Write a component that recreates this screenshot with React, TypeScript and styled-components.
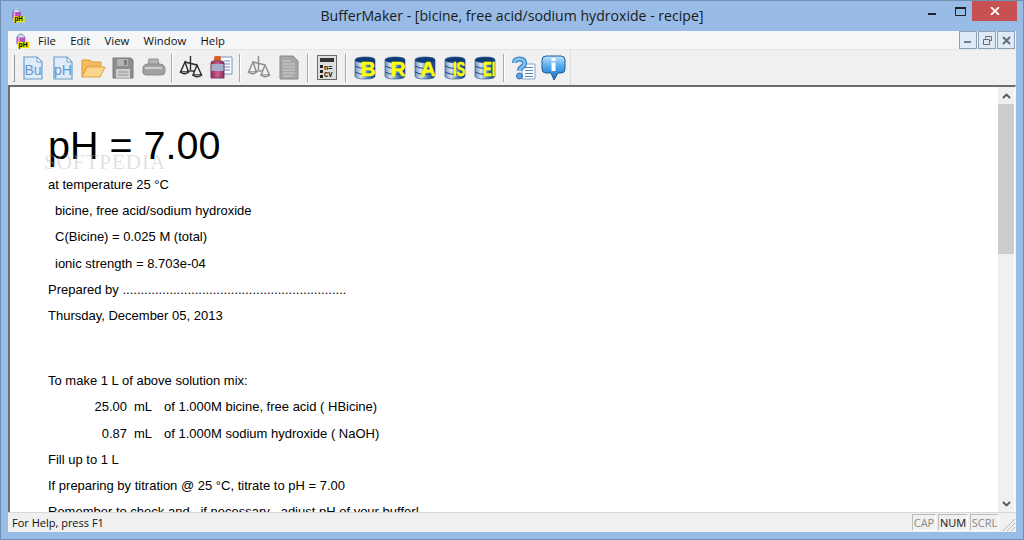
import React from "react";
import styled, { createGlobalStyle } from "styled-components";

const Global = createGlobalStyle`
  html, body { margin: 0; padding: 0; width: 1024px; height: 540px; overflow: hidden; }
  #root { width: 1024px; height: 540px; }
  * { box-sizing: border-box; }
`;

const Frame = styled.div`
  width: 1024px; height: 540px; background: #98bce6; border: 1px solid #6f8fb5;
  display: flex; flex-direction: column; font-family: "Open Sans", "Liberation Sans", sans-serif; color: #000;
`;
const TitleBar = styled.div`
  height: 30px; display: grid; grid-template-columns: 1fr auto 1fr; align-items: start; flex: none;
`;
const TitleLeft = styled.div` padding: 6px 0 0 10px; display: flex; `;
const TitleText = styled.div`
  font-size: 14.1px; line-height: 20px; padding-top: 5px; color: #1a1a1a; white-space: nowrap;
`;
const WinControls = styled.div` display: flex; justify-content: flex-end; padding-right: 6px; `;
const WinBtn = styled.div<{ $w: number; $bg?: string; $pt?: number }>`
  width: ${p => p.$w}px; height: 20px; background: ${p => p.$bg || "transparent"}; padding-top: ${p => p.$pt || 0}px;
  display: flex; align-items: center; justify-content: center;
`;
const Client = styled.div`
  flex: 1; margin: 0 7px 7px 7px; background: #f0f0f0; display: flex; flex-direction: column; min-height: 0;
`;
const MenuBar = styled.div`
  height: 19px; flex: none; background: #f5f6f7; display: flex; align-items: center; padding-left: 7px; position: relative;
  border-bottom: 1px solid #e6e6e6;
`;
const MenuItem = styled.span`
  font-size: 11.3px; line-height: 19px; color: #111; margin-right: 14.3px;
`;
const MenuIcon = styled.div` width: 23px; height: 19px; flex: none; padding-top: 1px; `;
const MdiGroup = styled.div` margin-left: auto; display: flex; gap: 1px; padding-right: 1px; `;
const MdiBtn = styled.div`
  width: 18px; height: 18px; background: #dfeaf6; border: 1px solid #8c9fb3; display: flex; align-items: center; justify-content: center;
`;
const ToolBar = styled.div`
  height: 35px; flex: none; display: flex; align-items: center; padding-left: 3px; width: 100%;
  background: #f0f0f0;
`;
const ToolStrip = styled.div`
  display: flex; align-items: center; height: 35px; border-right: 1px solid #dcdcdc; padding-right: 2px;
`;
const Grip = styled.div`
  width: 3px; height: 28px; margin: 0 3px 0 1px; border-left: 1px solid #fff; border-right: 1px solid #a0a0a0; border-top: 1px solid #fff; border-bottom: 1px solid #a0a0a0; background: #e9e9e9; flex: none;
`;
const ToolBtn = styled.div`
  width: 30px; height: 30px; display: flex; align-items: center; justify-content: center; position: relative; flex: none;
`;
const ToolSep = styled.div`
  width: 8px; height: 30px; flex: none; position: relative;
  &::after { content: ""; position: absolute; left: 3px; top: 1px; bottom: 1px; width: 2px; background: linear-gradient(90deg, #a9a9a9 50%, #fff 50%); }
`;
const DbLetter = styled.span<{ $squeeze?: boolean }>`
  position: absolute; left: 0; right: 0; top: 6px; text-align: center; font: bold 21px/20px "Liberation Sans", sans-serif;
  color: #ffff00; -webkit-text-stroke: .5px #ffff00; white-space: nowrap; padding-left: 6px; transform: ${p => (p.$squeeze ? "scaleX(.62)" : "none")};
  transform-origin: 70% 50%;
`;
const Work = styled.div`
  flex: 1; min-height: 0; display: flex; border-left: 2px solid #6d6d6d; border-top: 2px solid #6d6d6d; margin: 0; background: #fff; padding-right: 1px; border-right: 1px solid #f0f0f0;
`;
const Doc = styled.div`
  flex: 1; min-width: 0; background: #fff; position: relative; overflow: hidden; padding: 26px 0 0 38px;
  font: 13px/26.2px "Liberation Sans", Arial, sans-serif; color: #000;
`;
const Heading = styled.div`
  font-size: 39.5px; line-height: 64px; height: 59px; white-space: nowrap;
`;
const Line = styled.div<{ $indent?: number; $gapBefore?: number }>`
  height: 26.2px; white-space: pre; padding-left: ${p => p.$indent || 0}px; margin-top: ${p => p.$gapBefore || 0}px;
`;
const Amount = styled.span` display: inline-block; width: 79px; text-align: right; `;
const Unit = styled.span` display: inline-block; width: 37px; padding-left: 7px; `;
const Watermark = styled.div`
  position: absolute; left: 34px; top: 62px; font: 21px/26px "Liberation Serif", serif; letter-spacing: 1px; color: rgba(170,170,170,.36); white-space: nowrap;
`;
const Scroll = styled.div`
  width: 16px; flex: none; background: #f0f0f0; display: flex; flex-direction: column; align-items: center;
`;
const ScrollArrow = styled.div` width: 16px; height: 17px; display: flex; align-items: center; justify-content: center; flex: none; `;
const ScrollThumb = styled.div` width: 16px; height: 150px; background: #cdcdcd; flex: none; `;
const ScrollFill = styled.div` flex: 1; `;
const StatusBar = styled.div`
  height: 20px; flex: none; display: flex; align-items: center; padding: 0 0 0 4px; background: #f0f0f0; border-top: 1px solid #dadada; position: relative;
`;
const StatusText = styled.span` font-size: 11px; line-height: 18px; flex: 1; color: #111; `;
const Pane = styled.span<{ $on?: boolean; $w: number }>`
  width: ${p => p.$w}px; height: 17px; margin-right: 2px; border: 1px solid #bcbcbc; border-right-color: #fff; border-bottom-color: #fff;
  font-size: 11px; line-height: 15px; text-align: center; color: ${p => (p.$on ? "#111" : "#8a8a8a")}; flex: none; overflow: hidden;
`;
const GripCorner = styled.div` width: 15px; height: 18px; flex: none; `;

const Flask = ({ s = 1 }: { s?: number }) => (
  <svg width={18 * s} height={19 * s} viewBox="0 0 18 19">
    <path d="M5 1h3v2H5z" fill="#a8dcdc" />
    <path d="M4 3h5l2 3v7H2V6z" fill="#c04fc4" stroke="#6c3a80" strokeWidth=".6" />
    <path d="M4 3h5l1.5 3H3z" fill="#bfe6ea" />
    <path d="M3 6h2v7H3z" fill="#e7a0ea" />
    <rect x="3" y="11" width="13" height="7" fill="#f0ec00" />
    <text x="4" y="17" fontFamily="Liberation Sans" fontWeight="700" fontSize="7.5" fill="#000">pH</text>
  </svg>
);

const DocIcon = ({ label }: { label: string }) => (
  <svg width="20" height="24" viewBox="0 0 20 24">
    <path d="M1 1h13l5 5v17H1z" fill="#dfebf8" stroke="#6f9cc8" strokeWidth="1.2" />
    <path d="M14 1v5h5z" fill="#fff" stroke="#6f9cc8" />
    <text x="10" y="19" textAnchor="middle" fontFamily="Liberation Sans" fontSize="14" fill="#5f98d0">{label}</text>
  </svg>
);
const Folder = () => (
  <svg width="25" height="21" viewBox="0 0 25 21">
    <path d="M1 20V3h8l2 2h9v4H6L1 20z" fill="#f8bd60" stroke="#dd9a3a" />
    <path d="M1 20l5-10h18l-5 10z" fill="#fcd68c" stroke="#e0a040" />
  </svg>
);
const Save = () => (
  <svg width="22" height="22" viewBox="0 0 22 22">
    <path d="M1 1h18l2 2v18H1z" fill="#8e8e8e" stroke="#7a7a7a" />
    <rect x="5" y="2" width="11" height="7" fill="#b4b4b4" />
    <rect x="12" y="3" width="3" height="5" fill="#7c7c7c" />
    <rect x="4" y="12" width="14" height="9" fill="#cdcdcd" />
    <path d="M6 15h10M6 18h10" stroke="#9a9a9a" />
  </svg>
);
const Printer = () => (
  <svg width="25" height="20" viewBox="0 0 25 20">
    <path d="M8 1h9l1 6H7z" fill="#b4b4b4" stroke="#909090" />
    <path d="M2 9q1-3 5-3h12q4 0 5 4v4q0 3-4 3H6q-5 0-4-4z" fill="#a0a0a0" stroke="#8c8c8c" />
    <path d="M4 10h17" stroke="#cfcfcf" strokeWidth="2" />
  </svg>
);
const Scale = ({ dim }: { dim?: boolean }) => {
  const c = dim ? "#8c8c8c" : "#2a2a2a";
  return (
    <svg width="25" height="25" viewBox="0 0 25 25" fill="none" stroke={c} strokeWidth="1.4">
      <path d="M11.5 1v14M6 7l12 3" />
      <path d="M6 7L1.5 17h8zM18 10l-4 10h8.5z" />
      <path d="M1.5 17q4 3.5 8 0M14 20q4 3.5 8.5 0" fill={dim ? "#cfcfcf" : "#b4b4b4"} />
      <path d="M8 16h7" />
    </svg>
  );
};
const Bottle = () => (
  <svg width="23" height="25" viewBox="0 0 23 25">
    <defs>
      <linearGradient id="btl" x1="0" x2="1" y1="0" y2="0">
        <stop offset="0" stopColor="#8c2a5c" />
        <stop offset=".5" stopColor="#d0608e" />
        <stop offset="1" stopColor="#8c2a5c" />
      </linearGradient>
    </defs>
    <path d="M8 2h14v17H8z" fill="#fff" stroke="#6c96c4" />
    <path d="M14 6h6M14 9h6M14 12h6M14 15h6" stroke="#5a8ac0" />
    <rect x="4" y="1" width="7" height="5" rx="1.5" fill="#d8622a" />
    <path d="M1 8q0-2 3-2h7q3 0 3 2v15H1z" fill="url(#btl)" stroke="#70395c" />
    <rect x="1.5" y="9" width="12" height="7" fill="#a8aec8" />
  </svg>
);
const GrayDoc = () => (
  <svg width="20" height="25" viewBox="0 0 20 25">
    <path d="M1 1h13l5 5v18H1z" fill="#a6a6a6" stroke="#8a8a8a" />
    <path d="M4 6h8M4 9h12M4 12h12M4 15h12M4 18h12M4 21h10" stroke="#cfcfcf" />
  </svg>
);
const Calc = () => (
  <svg width="20" height="25" viewBox="0 0 20 25">
    <rect x=".5" y=".5" width="19" height="24" fill="#dedede" stroke="#6a6a6a" />
    <rect x="3" y="3" width="14" height="4" fill="#333" />
    <path d="M3 10h3v3H3zM3 15h3v3H3zM3 20h3v3H3z" fill="#222" />
    <text x="7" y="15" fontFamily="Liberation Mono" fontWeight="700" fontSize="7" fill="#111">n=</text>
    <text x="7" y="22" fontFamily="Liberation Mono" fontWeight="700" fontSize="7" fill="#111">CV</text>
  </svg>
);
const Db = ({ label }: { label: string }) => (
  <ToolBtn>
    <svg width="22" height="24" viewBox="0 0 22 24">
      <defs>
        <linearGradient id="dbg" x1="0" x2="1" y1="0" y2="0">
          <stop offset="0" stopColor="#6f90bd" />
          <stop offset=".3" stopColor="#dbe4f0" />
          <stop offset=".7" stopColor="#3a6eaa" />
          <stop offset="1" stopColor="#103a72" />
        </linearGradient>
      </defs>
      <path d="M1 4q0-3 10-3t10 3v16q0 3-10 3T1 20z" fill="url(#dbg)" stroke="#1c4a80" strokeWidth=".6" />
      <ellipse cx="11" cy="4" rx="10" ry="3" fill="#0f3a78" />
      <path d="M1 10q10 5 20 0M1 16q10 5 20 0" fill="none" stroke="#1a4a86" strokeWidth="1" />
    </svg>
    <DbLetter $squeeze={label.length > 1}>{label}</DbLetter>
  </ToolBtn>
);
const HelpIcon = () => (
  <svg width="25" height="24" viewBox="0 0 25 24">
    <path d="M11 8h13v15H11z" fill="#fff" stroke="#8da0b8" />
    <path d="M14 11.500h8M14 14.500h8M14 17.500h8M14 20.500h8" stroke="#4f88c8" />
    <path d="M3.500 7q0-4 5-4t5 4q0 2.500-2.500 4t-2.500 3.500" fill="none" stroke="#2f76bc" strokeWidth="5" />
    <path d="M3.500 7q0-4 5-4t5 4q0 2.500-2.500 4t-2.500 3.500" fill="none" stroke="#7fc0f0" strokeWidth="3" />
    <circle cx="8.500" cy="20" r="3" fill="#5a9ee0" stroke="#2f76bc" />
  </svg>
);
const InfoIcon = () => (
  <svg width="25" height="26" viewBox="0 0 25 26">
    <defs>
      <linearGradient id="inf" x1="0" x2="0" y1="0" y2="1">
        <stop offset="0" stopColor="#bfe4fa" />
        <stop offset=".45" stopColor="#4ea8ea" />
        <stop offset="1" stopColor="#1f6cc0" />
      </linearGradient>
    </defs>
    <path d="M5 1h15q4 0 4 4v9q0 4-4 4h-3l-4 7-3-7H5q-4 0-4-4V5q0-4 4-4z" fill="url(#inf)" stroke="#1f5c9e" />
    <rect x="10.500" y="3" width="4" height="3" fill="#fff" />
    <rect x="10.500" y="7.500" width="4" height="8.500" fill="#fff" />
  </svg>
);

const lines = [
  ["at temperature 25 °C", 0],
  ["bicine, free acid/sodium hydroxide", 7],
  ["C(Bicine) = 0.025 M (total)", 7],
  ["ionic strength = 8.703e-04", 7],
  ["Prepared by ..............................................................", 0],
  ["Thursday, December 05, 2013", 0],
] as const;

export default function App() {
  return (
    <Frame>
      <Global />
      <TitleBar>
        <TitleLeft><Flask s={0.85} /></TitleLeft>
        <TitleText>BufferMaker - [bicine, free acid/sodium hydroxide - recipe]</TitleText>
        <WinControls>
          <WinBtn $w={32} $pt={6}><svg width="8" height="2"><rect width="8" height="2" fill="#222" /></svg></WinBtn>
          <WinBtn $w={24}><svg width="11" height="9" viewBox="0 0 11 9"><path d="M.5 1.5h10v7H.5z" fill="none" stroke="#222" /><rect x="0" y="0" width="11" height="2" fill="#222" /></svg></WinBtn>
          <WinBtn $w={45} $bg="#c75050"><svg width="10" height="8" viewBox="0 0 10 8"><path d="M1 0l8 8M9 0L1 8" fill="none" stroke="#fff" strokeWidth="1.8" /></svg></WinBtn>
        </WinControls>
      </TitleBar>
      <Client>
        <MenuBar>
          <MenuIcon><Flask s={0.9} /></MenuIcon>
          <MenuItem>File</MenuItem>
          <MenuItem>Edit</MenuItem>
          <MenuItem>View</MenuItem>
          <MenuItem>Window</MenuItem>
          <MenuItem>Help</MenuItem>
          <MdiGroup>
            <MdiBtn><svg width="8" height="8"><rect y="5" width="7" height="2" fill="#6f7f90" /></svg></MdiBtn>
            <MdiBtn><svg width="9" height="9" viewBox="0 0 9 9" fill="none" stroke="#5d6d7e"><path d="M2.5 2.5V.5h6v4h-2M.5 3.5h6v5h-6z" /></svg></MdiBtn>
            <MdiBtn><svg width="9" height="9" viewBox="0 0 9 9" fill="none" stroke="#5d6d7e" strokeWidth="2"><path d="M1 1l7 7M8 1L1 8" /></svg></MdiBtn>
          </MdiGroup>
        </MenuBar>
        <ToolBar>
          <ToolStrip>
            <Grip />
            <ToolBtn><DocIcon label="Bu" /></ToolBtn>
            <ToolBtn><DocIcon label="pH" /></ToolBtn>
            <ToolBtn><Folder /></ToolBtn>
            <ToolBtn><Save /></ToolBtn>
            <ToolBtn><Printer /></ToolBtn>
            <ToolSep />
            <ToolBtn><Scale /></ToolBtn>
            <ToolBtn><Bottle /></ToolBtn>
            <ToolSep />
            <ToolBtn><Scale dim /></ToolBtn>
            <ToolBtn><GrayDoc /></ToolBtn>
            <ToolSep />
            <ToolBtn><Calc /></ToolBtn>
            <ToolSep />
            <Db label="B" />
            <Db label="R" />
            <Db label="A" />
            <Db label="IS" />
            <Db label="EI" />
            <ToolSep />
            <ToolBtn><HelpIcon /></ToolBtn>
            <ToolBtn><InfoIcon /></ToolBtn>
          </ToolStrip>
        </ToolBar>
        <Work>
          <Doc>
            <Heading>pH = 7.00</Heading>
            {lines.map(([t, i]) => <Line key={t} $indent={i}>{t}</Line>)}
            <Line $gapBefore={39}>To make 1 L of above solution mix:</Line>
            <Line><Amount>25.00</Amount><Unit>mL</Unit>of 1.000M bicine, free acid ( HBicine)</Line>
            <Line><Amount>0.87</Amount><Unit>mL</Unit>of 1.000M sodium hydroxide ( NaOH)</Line>
            <Line>Fill up to 1 L</Line>
            <Line>If preparing by titration @ 25 °C, titrate to pH = 7.00</Line>
            <Line>Remember to check and , if necessary , adjust pH of your buffer!</Line>
            <Watermark>SOFTPEDIA</Watermark>
          </Doc>
          <Scroll>
            <ScrollArrow><svg width="9" height="6" viewBox="0 0 9 6" fill="none" stroke="#555" strokeWidth="1.8"><path d="M1 5l3.5-3.5L8 5" /></svg></ScrollArrow>
            <ScrollThumb />
            <ScrollFill />
            <ScrollArrow><svg width="9" height="6" viewBox="0 0 9 6" fill="none" stroke="#555" strokeWidth="1.8"><path d="M1 1l3.5 3.5L8 1" /></svg></ScrollArrow>
          </Scroll>
        </Work>
        <StatusBar>
          <StatusText>For Help, press F1</StatusText>
          <Pane $w={24}>CAP</Pane>
          <Pane $w={30} $on>NUM</Pane>
          <Pane $w={29}>SCRL</Pane>
          <GripCorner><svg width="15" height="18" viewBox="0 0 15 18" stroke="#b8b8b8"><path d="M14 5L2 17M14 9l-8 8M14 13l-4 4" /></svg></GripCorner>
        </StatusBar>
      </Client>
    </Frame>
  );
}
